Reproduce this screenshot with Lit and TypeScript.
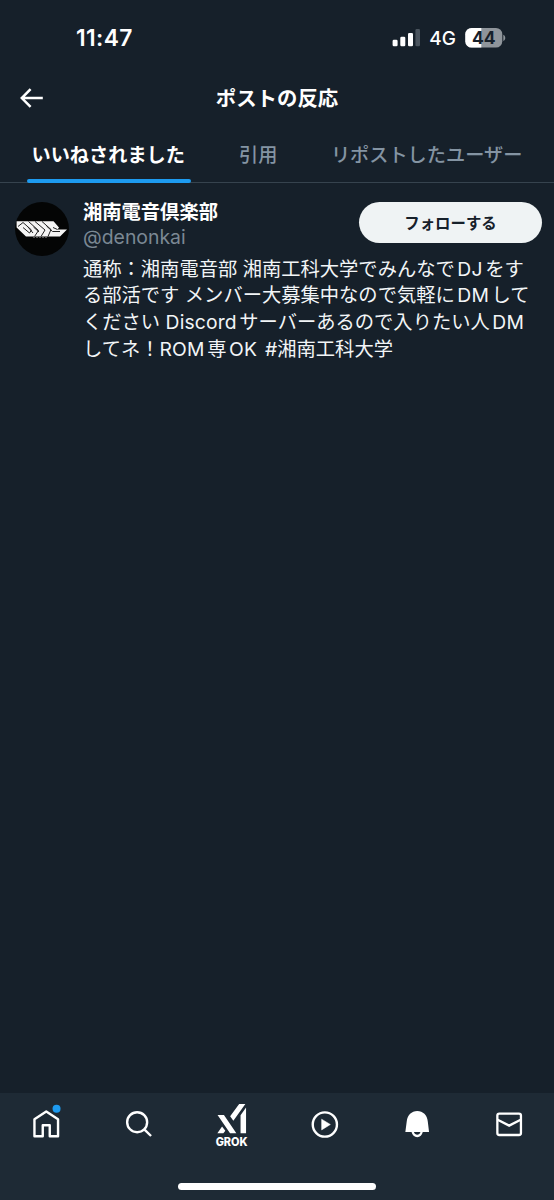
import { LitElement, html, css, svg } from "lit";
import { customElement } from "lit/decorators.js";

const TABS = [
  { label: "いいねされました", cls: "tab active" },
  { label: "引用", cls: "tab quotes" },
  { label: "リポストしたユーザー", cls: "tab reposts" },
];

const NAV = [
  {
    name: "ホーム",
    box: "28.25 1100 36 50",
    art: svg`<path d="M34.7 1136.2V1119.2L46.5 1111.4L58.3 1119.2V1136.2H50V1125.3H43V1136.2Z" fill="none" stroke="#fff" stroke-width="2.4" stroke-linejoin="round"/>
      <circle cx="56.8" cy="1108.8" r="4" fill="#1d9bf0"/>`,
  },
  {
    name: "検索",
    box: "120.75 1100 36 50",
    art: svg`<circle cx="136.9" cy="1122.2" r="10" fill="none" stroke="#fff" stroke-width="2.4"/>
      <path d="M144 1129.3L150.8 1136" stroke="#fff" stroke-width="2.4" fill="none"/>`,
  },
  {
    name: "Grok",
    box: "213.25 1100 36 50",
    art: svg`<path d="M217.8 1115H224.2L236.6 1133.3H230.3Z M239.4 1104.1H245.6L233.6 1120.8L230.4 1116.3Z M246.3 1107.6V1133.3H240.8V1115.3Z M222.3 1126.6L225.6 1130.7L223.6 1133.3H217.6Z" fill="#fff"/>
      <text class="grok" x="231.9" y="1145.9" text-anchor="middle" textLength="32" lengthAdjust="spacingAndGlyphs">GROK</text>`,
  },
  {
    name: "動画",
    box: "305.75 1100 36 50",
    art: svg`<circle cx="324.6" cy="1124.5" r="12.1" fill="none" stroke="#fff" stroke-width="2.4"/>
      <path d="M321.4 1119.2L330.1 1124.5L321.4 1129.9Z" fill="#fff" stroke="#fff" stroke-width=".5" stroke-linejoin="round"/>`,
  },
  {
    name: "通知",
    box: "398.25 1100 36 50",
    art: svg`<path d="M405.6 1132.1L407 1121.2C407.7 1115.2 411.8 1111 417.5 1111S427.4 1115.2 428 1121.2L429.3 1132.1H423C422.4 1135.2 420.2 1137.2 417.5 1137.2S412.4 1135.2 411.8 1132.1ZM414.2 1132.1C414.7 1133.9 416 1134.8 417.5 1134.8S420.2 1133.9 420.7 1132.1Z" fill="#fff" fill-rule="evenodd"/>`,
  },
  {
    name: "メッセージ",
    box: "490.75 1100 36 50",
    art: svg`<rect x="497.1" y="1113.6" width="23.6" height="21.4" rx="2" fill="none" stroke="#fff" stroke-width="2.3"/>
      <path d="M497.4 1119.8L508.9 1125.6L520.4 1119.8" fill="none" stroke="#fff" stroke-width="2.3"/>`,
  },
];

@customElement("app-root")
export class AppRoot extends LitElement {
  static styles = css`
    :host {
      display: flex;
      flex-direction: column;
      height: 1200px;
      width: 554px;
      overflow: hidden;
      background: #16202a;
      color: #fff;
      font-family: Inter, "Noto Sans CJK JP", sans-serif;
      white-space: nowrap;
    }
    * { box-sizing: border-box; }
    svg { display: block; flex: none; }
    .status {
      height: 75px;
      padding: 0 48px 0 76px;
      display: flex;
      align-items: center;
      justify-content: space-between;
    }
    .clock { font-size: 22.8px; font-weight: 600; letter-spacing: 0.4px; line-height: 26px; }
    .net { font: 500 19px/24px Inter, sans-serif; position: relative; top: 1px; }
    .lvl { font: 700 17.5px Inter, sans-serif; fill: #16202a; }
    .header {
      height: 45px;
      display: grid;
      grid-template-columns: 60px 1fr 60px;
      align-items: center;
      padding-left: 17px;
      padding-right: 17px;
    }
    .title {
      font: 700 20.4px/28px "Noto Sans CJK JP", sans-serif;
      text-align: center;
      margin: -2px 0 0;
    }
    .tabs {
      height: 63px;
      display: flex;
      padding-left: 26.5px;
      border-bottom: 1px solid #36434e;
    }
    .tab {
      height: 62px;
      padding: 20px 5px 0;
      font: 500 19.2px/28px "Noto Sans CJK JP", sans-serif;
      color: #8494a3;
    }
    .active {
      height: 63px;
      width: 164.5px;
      color: #fff;
      font-weight: 700;
      display: flex;
      flex-direction: column;
      justify-content: space-between;
    }
    .bar { height: 4px; border-radius: 2px; background: #1d9bf0; margin: 0 -5px; }
    .quotes { margin-left: 43px; }
    .reposts { margin-left: 43.5px; }
    .user {
      flex: 1;
      display: grid;
      grid-template-columns: 54px 1fr;
      column-gap: 14px;
      align-items: start;
      padding: 18.5px 12px 0 15px;
    }
    .top { display: flex; justify-content: space-between; height: 54.2px; }
    .name { font: 700 19.3px/26px "Noto Sans CJK JP", sans-serif; margin-top: -4px; }
    .handle { font: 400 19.4px/26px Inter, sans-serif; color: #7b8894; }
    .follow {
      width: 183px;
      height: 41px;
      border: 0;
      padding: 0;
      border-radius: 21px;
      background: #eff3f4;
      color: #16202a;
      font: 700 15.4px/41px "Noto Sans CJK JP", sans-serif;
    }
    .bio {
      font-size: 19.3px;
      line-height: 26.8px;
      color: #f2f5f7;
    }
    .lat { margin: 0 2.6px; letter-spacing: 0.15px; }
    .first { margin-left: 0; }
    .nav {
      height: 107px;
      background: #1e2a35;
      display: flex;
      flex-direction: column;
      align-items: center;
      justify-content: space-between;
      padding-bottom: 10.5px;
    }
    .items {
      display: grid;
      grid-template-columns: repeat(6, 92.5px);
      justify-items: center;
      width: 554px;
      padding-top: 7px;
    }
    .grok { font: 800 11.3px Inter, sans-serif; fill: #fff; }
    .homebar { width: 198px; height: 6.5px; border-radius: 4px; background: #fff; }
    .sys { display: flex; align-items: center; gap: 9px; }
  `;

  render() {
    return html`
      <div class="status">
        <span class="clock">11:47</span>
        <div class="sys">
          <svg width="28" height="20" viewBox="0 0 28 20">
            <rect x="0.6" y="11.7" width="5" height="6.5" rx="1.3" fill="#fff" />
            <rect x="8.3" y="8.7" width="5" height="9.5" rx="1.3" fill="#fff" />
            <rect x="16" y="4.9" width="5" height="13.3" rx="1.3" fill="#fff" />
            <rect x="23.4" y="1.1" width="4.6" height="17.1" rx="1.3" fill="#4a545e" />
          </svg>
          <span class="net">4G</span>
          <svg width="41" height="20" viewBox="0 0 41 20">
            <defs><clipPath id="b"><rect x="0.3" y="0" width="37" height="19.6" rx="6.3" /></clipPath></defs>
            <g clip-path="url(#b)">
              <rect width="38" height="20" fill="#8f959b" />
              <rect width="16.3" height="20" fill="#fff" />
            </g>
            <path d="M38.3 6.7C40.9 7.7 40.9 12 38.3 13Z" fill="#8f959b" />
            <text class="lvl" x="18.8" y="16" text-anchor="middle">44</text>
          </svg>
        </div>
      </div>
      <div class="header">
        <svg width="30" height="24" viewBox="17 85.5 30 24">
          <path d="M30.6 88.6L21.8 97.6L30.6 106.4M22 97.6H42.8" fill="none" stroke="#fff" stroke-width="2.5" />
        </svg>
        <h1 class="title">ポストの反応</h1>
      </div>
      <div class="tabs">
        ${TABS.map((t, i) => html`<div class=${t.cls}><span>${t.label}</span>${i === 0 ? html`<div class="bar"></div>` : ""}</div>`)}
      </div>
      <div class="user">
        <svg width="54" height="54" viewBox="0 0 54 54">
          <circle cx="27" cy="27" r="27" fill="#040505" />
          <path d="M1.6 19.2H38.5L44 25.5L42.5 27.5H52L45 34.5H11L1.6 25.5Z" fill="#f4f4f4" />
          <path d="M3 24.5L8 20.5L16.5 28L14.5 31L8 25.5M13.5 19.5L23.5 28.5L19.5 34.5M18 31L13 25M20 19.5L30 28L26 34.5M24 30L18.5 25M27 19.5L36 27.5L33 34.5M31.5 24L37.5 29.5H45M38 25.5L42.5 27.5" fill="none" stroke="#222" stroke-width="1" />
          <path d="M18 35.2H33" stroke="#777" stroke-width="1" stroke-dasharray="2 1" />
        </svg>
        <div>
          <div class="top">
            <div>
              <div class="name">湘南電音倶楽部</div>
              <div class="handle">@denonkai</div>
            </div>
            <button class="follow">フォローする</button>
          </div>
          <div class="bio">
            <div>通称：湘南電音部 湘南工科大学でみんなで<span class="lat">DJ</span>をす</div>
            <div>る部活です メンバー大募集中なので気軽に<span class="lat">DM</span>して</div>
            <div>ください <span class="lat first">Discord</span>サーバーあるので入りたい人<span class="lat">DM</span></div>
            <div>してネ！<span class="lat first">ROM</span>専<span class="lat">OK</span> #湘南工科大学</div>
          </div>
        </div>
      </div>
      <div class="nav">
        <div class="items">
          ${NAV.map((n) => html`<svg width="36" height="50" viewBox=${n.box} aria-label=${n.name}>${n.art}</svg>`)}
        </div>
        <div class="homebar"></div>
      </div>
    `;
  }
}
